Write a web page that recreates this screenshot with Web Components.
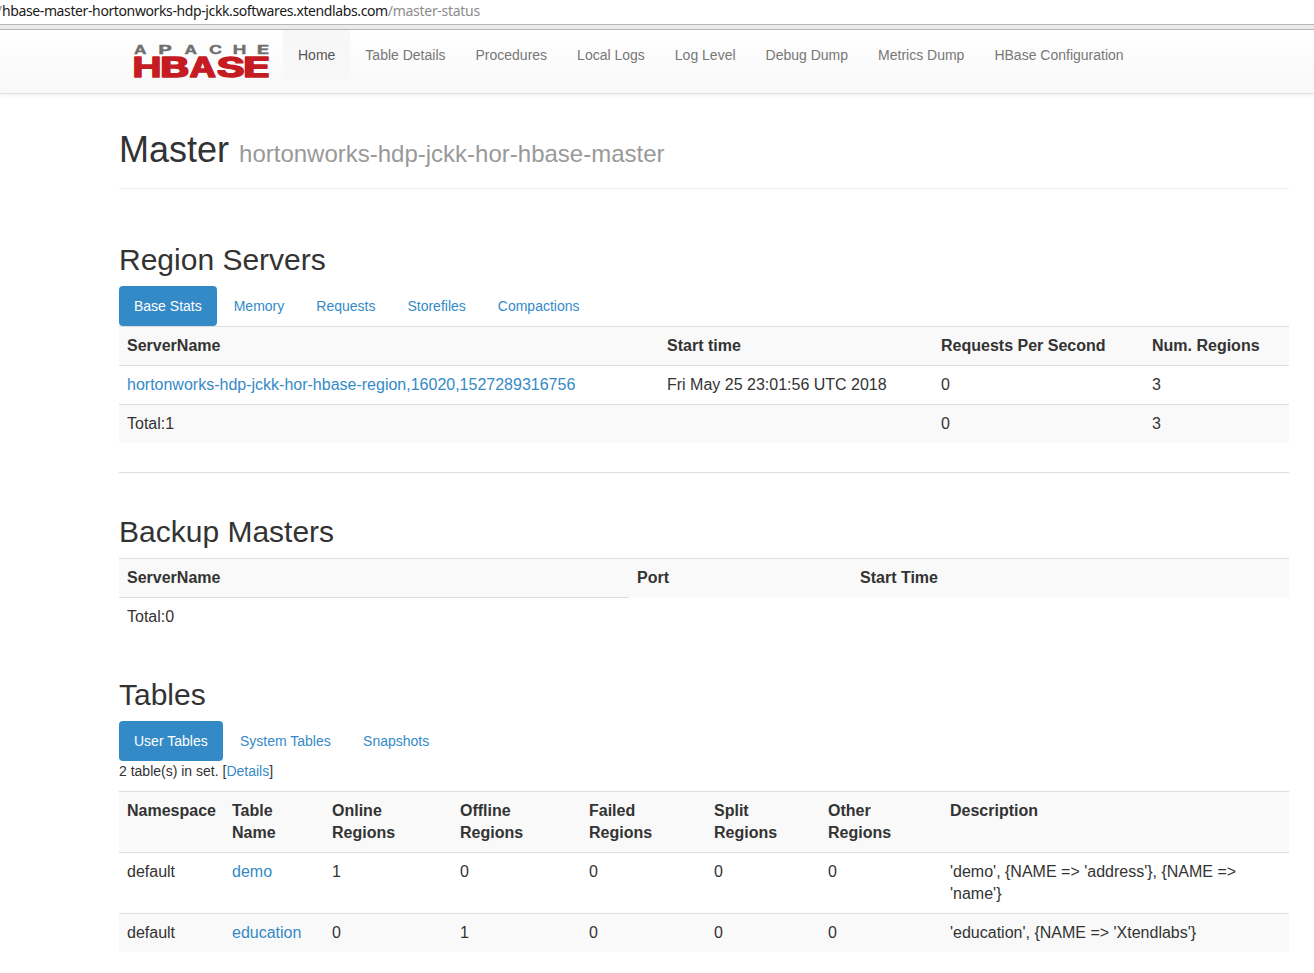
<!DOCTYPE html>
<html lang="en">
<head>
<meta charset="utf-8">
<title>Master: hortonworks-hdp-jckk-hor-hbase-master</title>
<style>
body{margin:0;background:#fff;color:#333;font:14px/20px "Liberation Sans",Arial,sans-serif;height:973px;overflow:hidden}
main{margin:0 25px 0 119px}
</style>
</head>
<body>
<address-bar><span slot="host">hbase-master-hortonworks-hdp-jckk.softwares.xtendlabs.com</span><span slot="path">/master-status</span></address-bar>
<nav-bar>
<nav-link active>Home</nav-link><nav-link>Table Details</nav-link><nav-link>Procedures</nav-link><nav-link>Local Logs</nav-link><nav-link>Log Level</nav-link><nav-link>Debug Dump</nav-link><nav-link>Metrics Dump</nav-link><nav-link>HBase Configuration</nav-link>
</nav-bar>
<main>
<page-header>Master<span slot="sub">hortonworks-hdp-jckk-hor-hbase-master</span></page-header>
<page-section style="--top:54px" heading="Region Servers">
<tab-pills><tab-pill active>Base Stats</tab-pill><tab-pill>Memory</tab-pill><tab-pill>Requests</tab-pill><tab-pill>Storefiles</tab-pill><tab-pill>Compactions</tab-pill></tab-pills>
<data-table id="servers"></data-table>
</page-section>
<section-rule></section-rule>
<page-section style="--top:42px" heading="Backup Masters">
<data-table id="backups"></data-table>
</page-section>
<page-section style="--top:42px" heading="Tables">
<tab-pills style="gap:2.3px"><tab-pill active>User Tables</tab-pill><tab-pill>System Tables</tab-pill><tab-pill>Snapshots</tab-pill></tab-pills>
<table-summary>2 table(s) in set. [<a>Details</a>]</table-summary>
<data-table id="tables"></data-table>
</page-section>
</main>
<script>
const define = (name, html, setup) => customElements.define(name, class extends HTMLElement {
  constructor() {
    super();
    this.attachShadow({mode: 'open'}).innerHTML = html;
  }
  connectedCallback() { if (setup) setup(this, this.shadowRoot); }
});

define('address-bar', `<style>
:host{display:flex;height:24px;line-height:22px;background:#fff;border-bottom:1px solid #b8b8b8;box-shadow:0 4px #ebebeb,0 5px #b8b8b8;margin-bottom:5px;font-family:"Noto Sans",sans-serif;font-size:14px;color:#1a1a1a;white-space:pre}
.host{letter-spacing:-.385px}
.path{letter-spacing:-.29px;color:#8c8c8c}
.lead{width:2px;display:flex;justify-content:flex-end;color:#8c8c8c}
</style><span class="lead">/</span><span class="host"><slot name="host"></slot></span><span class="path"><slot name="path"></slot></span>`);

// Each letter is stretched to its own width: [letter, x, width]
const letters = (list, y) => list.map(([c, x, w]) => `<text x="${x}" y="${y}" textLength="${w}" lengthAdjust="spacingAndGlyphs">${c}</text>`).join('');
define('hbase-logo', `<style>
:host{display:block;width:134px;height:34px}
svg{display:block;overflow:visible}
text{font-family:Inter,sans-serif;font-weight:700;stroke-linejoin:round}
.top{font-size:11.8px;font-weight:600;fill:#6f6f6f;stroke:#6f6f6f;stroke-width:.3px}
.main{font-size:27px;fill:#c41c22;stroke:#c41c22;stroke-width:1.3px}
</style><svg width="134" height="34" viewBox="0 0 134 34" role="img" aria-label="Apache HBase">
<g class="top">${letters([['A', 0, 12.5], ['P', 24.3, 13.7], ['A', 50.5, 12.5], ['C', 75, 13], ['H', 98.7, 13.6], ['E', 122.8, 12.6]], 9)}</g>
<g class="main">${letters([['H', -1.6, 29], ['B', 26.1, 29.2], ['A', 55.6, 26.5], ['S', 82.6, 28.4], ['E', 109, 27.2]], 32.4)}</g>
</svg>`);

define('nav-bar', `<style>
:host{display:flex;height:63px;background:linear-gradient(#fff,#f8f8f8);border-bottom:1px solid #e2e2e2;box-shadow:0 1px 4px rgba(0,0,0,.08)}
hbase-logo{margin:15px 15px 0 134px}
</style><hbase-logo></hbase-logo><slot></slot>`);

define('nav-link', `<style>
:host{display:block;height:20px;line-height:20px;padding:15px;color:#777;white-space:nowrap}
:host([active]){background:linear-gradient(#f7f7f7,#f8f8f8);color:#555}
</style><slot></slot>`);

define('page-header', `<style>
:host{display:flex;align-items:baseline;margin-top:36px;height:58px;border-bottom:1px solid #eee}
h1{margin:0;font-size:36px;line-height:40px;font-weight:400}
small{font-size:24px;line-height:24px;color:#999;margin-left:10px}
</style><h1><slot></slot></h1><small><slot name="sub"></slot></small>`);

define('page-section', `<style>
:host{display:block;padding-top:var(--top)}
h2{margin:0 0 10px;font-size:30px;line-height:33px;font-weight:400}
</style><h2></h2><slot></slot>`, (el, root) => { root.querySelector('h2').textContent = el.getAttribute('heading'); });

define('section-rule', `<style>:host{display:block;margin-top:29px;border-top:1px solid #ddd}</style>`);

define('tab-pills', `<style>:host{display:flex;gap:2px}</style><slot></slot>`);
define('tab-pill', `<style>
:host{display:block;padding:10px 15px;line-height:20px;color:#348ac7;border-radius:4px;white-space:nowrap}
:host([active]){background:#348ac7;color:#fff}
</style><slot></slot>`);

define('table-summary', `<style>:host{display:block;margin-bottom:10px}::slotted(a){color:#348ac7}</style><slot></slot>`);

define('data-table', `<style>
:host{display:block}
table{table-layout:fixed;width:1170px;border-collapse:separate;border-spacing:0;font-size:16px;line-height:22px}
th,td{padding:8px;text-align:left;vertical-align:top;border-top:1px solid #ddd}
th{font-weight:700}
tr:nth-child(odd){background:#f9f9f9}
a{color:#348ac7}
</style><table><colgroup></colgroup><tbody></tbody></table>`);

const fill = (id, widths, rows) => {
  const root = document.getElementById(id).shadowRoot;
  root.querySelector('colgroup').innerHTML = widths.map(w => `<col style="width:${w}px">`).join('');
  root.querySelector('tbody').innerHTML = rows.map((r, i) => {
    const tag = i ? 'td' : 'th';
    return '<tr>' + r.map(c => `<${tag}>${c}</${tag}>`).join('') + '</tr>';
  }).join('');
};
fill('servers', [540, 274, 211, 145], [
  ['ServerName', 'Start time', 'Requests Per Second', 'Num. Regions'],
  ['<a>hortonworks-hdp-jckk-hor-hbase-region,16020,1527289316756</a>', 'Fri May 25 23:01:56 UTC 2018', '0', '3'],
  ['Total:1', '', '0', '3']
]);
fill('backups', [510, 223, 437], [
  ['ServerName', 'Port', 'Start Time'],
  ['Total:0']
]);
fill('tables', [105, 100, 128, 129, 125, 114, 122, 347], [
  ['Namespace', 'Table<br>Name', 'Online<br>Regions', 'Offline<br>Regions', 'Failed<br>Regions', 'Split<br>Regions', 'Other<br>Regions', 'Description'],
  ['default', '<a>demo</a>', '1', '0', '0', '0', '0', "'demo', {NAME =&gt; 'address'}, {NAME =&gt; 'name'}"],
  ['default', '<a>education</a>', '0', '1', '0', '0', '0', "'education', {NAME =&gt; 'Xtendlabs'}"]
]);
</script>
</body>
</html>
